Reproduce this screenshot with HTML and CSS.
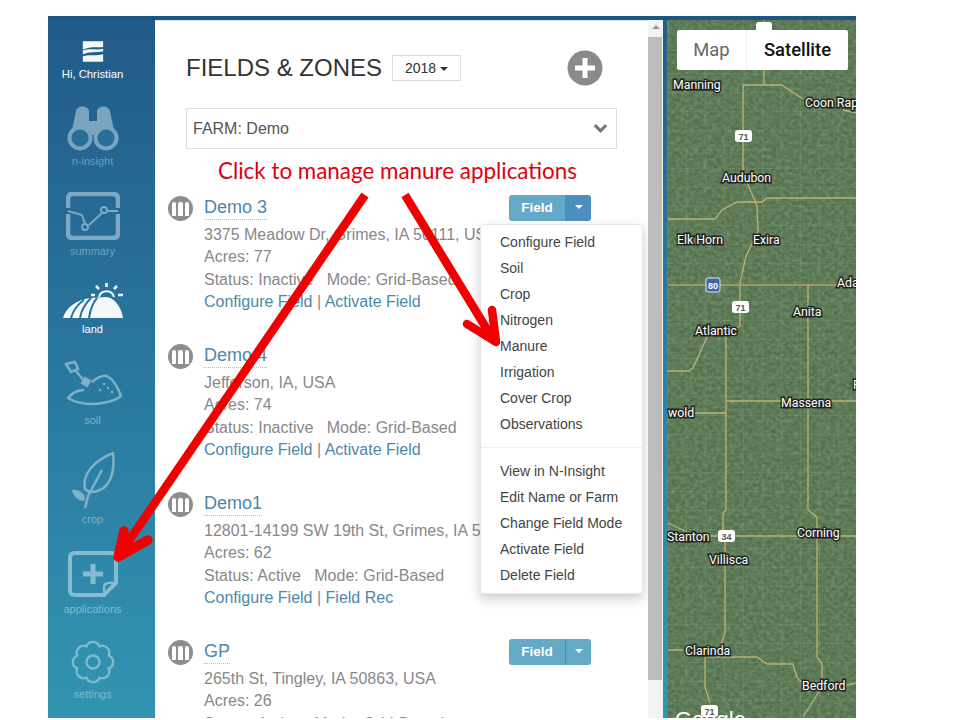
FILE: index.html
```html
<!DOCTYPE html>
<html lang="en">
<head>
<meta charset="utf-8">
<title>Fields &amp; Zones</title>
<link rel="stylesheet" href="styles.css">
</head>
<body>
<div class="app">
  <nav class="sidebar">
    <a class="nav-item nav-user">
      <svg class="ico-logo" viewBox="0 0 26 24"><path d="M2 1h22v6c-7 1-15-1-22 3zM2 11c7-3 15 0 22-2v3c-7 1-15 0-22 3zM2 17c7-2 15 0 22-2v8H2z" fill="#f4f7f9"/></svg>
      <span>Hi, Christian</span>
    </a>
    <a class="nav-item nav-ins">
      <svg class="ico-bino" viewBox="0 0 52 46" fill="none"><path d="M4 30L9 6c1-6 12-6 13 0v10h8V6c1-6 12-6 13 0l5 24z" fill="#7ba4bf"/><circle cx="13" cy="33" r="10.5" fill="#286f97" stroke="#7ba4bf" stroke-width="4"/><circle cx="39" cy="33" r="10.5" fill="#286f97" stroke="#7ba4bf" stroke-width="4"/></svg>
      <span>n-insight</span>
    </a>
    <a class="nav-item nav-sum">
      <svg class="ico-sum" viewBox="0 0 54 48" fill="none" stroke="#7da9c3" stroke-width="4"><path d="M2 16V7q0-5 5-5h40q5 0 5 5v9M2 22v19q0 5 5 5h40q5 0 5-5V22" stroke-width="4.5"/><path d="M2 19l14 4 3 9M23 33l14-13M41 19h11" stroke-width="2"/><circle cx="19" cy="35" r="3" stroke-width="2"/><circle cx="38" cy="18" r="3" stroke-width="2"/></svg>
      <span>summary</span>
    </a>
    <a class="nav-item nav-land">
      <svg class="ico-land" viewBox="0 0 62 37"><path d="M1 36C4 26 14 17 30 16l14-1c8 0 16 11 17 21z" fill="#f5f8fa"/><path d="M9 36c2-7 7-14 13-18M18 36c1-7 5-14 11-20M27 36c1-7 3-14 8-20" stroke="#28739a" stroke-width="2" fill="none"/><path d="M37 15a7.800 7.800 0 0 1 15 0" fill="none" stroke="#f5f8fa" stroke-width="2"/><path d="M44.500 1v4M34 4l3 3M55 4l-3 3M29 13h4M56 13h5" stroke="#f5f8fa" stroke-width="2.500"/></svg>
      <span>land</span>
    </a>
    <a class="nav-item nav-soil">
      <svg class="ico-soil" viewBox="0 0 58 46" fill="none" stroke="#7fb0c6" stroke-width="2.500"><path d="M2 4l9-2 3 7-7 3zM11 10l11 13"/><rect x="18" y="18" width="8" height="8" fill="#7fb0c6" stroke="none" transform="rotate(30 22 22)"/><path d="M28 22c7-6 11-7 15-6 6 3 11 12 14 20-10 8-37 12-53 2 4-5 10-8 16-8"/><path d="M40 24v0M44 28v0M48 32v0M36 30v0" stroke-linecap="round"/></svg>
      <span>soil</span>
    </a>
    <a class="nav-item nav-crop">
      <svg class="ico-crop" viewBox="0 0 44 58" fill="none" stroke="#7fb2c6" stroke-width="2.500"><path d="M14 37c-3-14 8-28 28-36 2 18-2 37-20 39-3 0-6-1-8-3z"/><path d="M14 56l3-12 14-26"/><path d="M13 49C7 49 2 44 1 38c5-1 12 2 13 8z" fill="#7fb2c6" stroke="none"/></svg>
      <span>crop</span>
    </a>
    <a class="nav-item nav-app">
      <svg class="ico-app" viewBox="0 0 50 46" fill="none" stroke="#84bdd1" stroke-width="4"><path d="M36 44H7q-5 0-5-5V7q0-5 5-5h36q5 0 5 5v25z"/><path d="M36 44V37q0-5 5-5h7" stroke-width="2.500"/><path d="M25 13v20M15 23h20" stroke-width="5"/></svg>
      <span>applications</span>
    </a>
    <a class="nav-item nav-set">
      <svg class="ico-set" viewBox="0 0 44 44" fill="none" stroke="#7cbacd" stroke-width="2.400"><path d="M15.500 6.300A7 7 0 0 1 28.500 6.300A7 7 0 0 1 37.700 15.500A7 7 0 0 1 37.700 28.500A7 7 0 0 1 28.500 37.700A7 7 0 0 1 15.500 37.700A7 7 0 0 1 6.300 28.500A7 7 0 0 1 6.300 15.500A7 7 0 0 1 15.500 6.300z"/><circle cx="22" cy="22" r="6.500"/></svg>
      <span>settings</span>
    </a>
  </nav>

  <main class="panel">
    <header class="panel-head">
      <h1>FIELDS &amp; ZONES</h1>
      <button class="year">2018<i class="caret"></i></button>
      <span class="add"><svg viewBox="0 0 36 36"><circle cx="18" cy="18" r="17.500" fill="#8a8a8a"/><path d="M18 8v20M8 18h20" stroke="#fff" stroke-width="5"/></svg></span>
    </header>
    <div class="farm">
      <span>FARM: Demo</span>
      <svg class="chev" viewBox="0 0 16 11"><path d="M2 2l6 6 6-6" fill="none" stroke="#777" stroke-width="3.400"/></svg>
    </div>

    <section class="fields">
      <article class="field">
        <span class="f-ico"><i></i><i></i><i></i></span>
        <div class="f-body">
          <a class="f-name">Demo 3</a>
          <p>3375 Meadow Dr, Grimes, IA 50111, USA</p>
          <p>Acres: 77</p>
          <p>Status: Inactive &nbsp; Mode: Grid-Based</p>
          <p><a>Configure Field</a> | <a>Activate Field</a></p>
        </div>
        <div class="btn-group"><span class="btn">Field</span><span class="btn-c open"><i class="caret"></i></span></div>
      </article>
      <article class="field">
        <span class="f-ico"><i></i><i></i><i></i></span>
        <div class="f-body">
          <a class="f-name">Demo 4</a>
          <p>Jefferson, IA, USA</p>
          <p>Acres: 74</p>
          <p>Status: Inactive &nbsp; Mode: Grid-Based</p>
          <p><a>Configure Field</a> | <a>Activate Field</a></p>
        </div>
      </article>
      <article class="field">
        <span class="f-ico"><i></i><i></i><i></i></span>
        <div class="f-body">
          <a class="f-name">Demo1</a>
          <p>12801-14199 SW 19th St, Grimes, IA 50111, USA</p>
          <p>Acres: 62</p>
          <p>Status: Active &nbsp; Mode: Grid-Based</p>
          <p><a>Configure Field</a> | <a>Field Rec</a></p>
        </div>
      </article>
      <article class="field">
        <span class="f-ico"><i></i><i></i><i></i></span>
        <div class="f-body">
          <a class="f-name">GP</a>
          <p>265th St, Tingley, IA 50863, USA</p>
          <p>Acres: 26</p>
          <p>Status: Active &nbsp; Mode: Grid-Based</p>
        </div>
        <div class="btn-group"><span class="btn">Field</span><span class="btn-c"><i class="caret"></i></span></div>
      </article>
    </section>

    <ul class="menu">
      <li>Configure Field</li><li>Soil</li><li>Crop</li><li>Nitrogen</li><li>Manure</li><li>Irrigation</li><li>Cover Crop</li><li>Observations</li>
      <li class="sep"></li>
      <li>View in N-Insight</li><li>Edit Name or Farm</li><li>Change Field Mode</li><li>Activate Field</li><li>Delete Field</li>
    </ul>
  </main>

  <div class="scroll"><span class="s-up"></span><span class="s-thumb"></span></div>

  <section class="map">
    <svg class="map-svg" viewBox="0 0 189 702">
      <defs>
        <filter id="tex" x="0" y="0" width="100%" height="100%">
          <feTurbulence type="fractalNoise" baseFrequency="0.22 0.28" numOctaves="3" seed="7"/>
          <feColorMatrix values="0 0 0 0 .16  0 0 0 0 .30  0 0 0 0 .17  1.500 0 0 0 -.45"/>
        </filter>
        <pattern id="sections" width="19" height="19" patternUnits="userSpaceOnUse">
          <path d="M0 .5h19M.5 0v19" stroke="#a5b08f" stroke-opacity=".16" fill="none"/>
        </pattern>
      </defs>
      <rect width="189" height="702" fill="#566f4c"/>
      <rect width="189" height="702" filter="url(#tex)"/>
      <rect width="189" height="702" fill="url(#sections)"/>
      <g class="roads">
        <path d="M97 4V69M76 157V69H115L136 83M176 94L189 97"/>
        <path d="M76 157L90 190L91 215L79 240L73 267V310L59 318"/>
        <path d="M1 203H48L55 194L70 186H95L100 182H189"/>
        <path d="M1 269H189" class="hwy"/>
        <path d="M141 269V494L150 501V641L155 647V667"/>
        <path d="M59 320V494L56 497V517L58 525V617L53 631"/>
        <path d="M59 385H189M26 397H59"/>
        <path d="M1 520H189M1 507L20 516"/>
        <path d="M1 634H16M40 641H90L100 648H126L130 662L136 667"/>
        <path d="M38 641V671L43 687"/>
        <path d="M153 674L136 701M176 670L189 667"/>
        <path d="M40 321L26 352L22 355H0"/>
      </g>
      <g class="badges">
        <rect x="89" y="6" width="16" height="12" rx="3"/>
        <rect x="68" y="114" width="17" height="12" rx="3"/>
        <rect x="65" y="285" width="17" height="12" rx="3"/>
        <rect x="51" y="514" width="17" height="12" rx="3"/>
        <rect x="34" y="689" width="17" height="12" rx="3"/>
      </g>
      <g class="badge-txt">
        <text x="76.500" y="123.500">71</text><text x="73.500" y="294.500">71</text><text x="59.500" y="523.500">34</text><text x="42.500" y="698.500">71</text>
      </g>
      <rect x="39" y="262" width="14" height="14" rx="2" fill="#3d69a8" stroke="#e8e8e8"/>
      <text class="i80" x="46" y="273">80</text>
      <g class="labels">
        <text x="6" y="73">Manning</text>
        <text x="138" y="91">Coon Rap</text>
        <text x="55" y="166">Audubon</text>
        <text x="10" y="228">Elk Horn</text>
        <text x="86" y="228">Exira</text>
        <text x="170" y="271">Ada</text>
        <text x="126" y="300">Anita</text>
        <text x="28" y="319">Atlantic</text>
        <text x="186" y="373">F</text>
        <text x="114" y="391">Massena</text>
        <text x="1" y="401">wold</text>
        <text x="0" y="525">Stanton</text>
        <text x="42" y="548">Villisca</text>
        <text x="130" y="521">Corning</text>
        <text x="18" y="639">Clarinda</text>
        <text x="135" y="674">Bedford</text>
      </g>
      <text class="google" x="8" y="711">Google</text>
    </svg>
    <div class="map-type"><span class="mt-map">Map</span><span class="mt-sat">Satellite</span></div>
  </section>

  <div class="note">Click to manage manure applications</div>
  <svg class="arrows" viewBox="0 0 808 702">
    <path d="M317 179L74 535" stroke="#f00000" stroke-width="8.500" fill="none"/>
    <path d="M70 541L76 515M70 541L100 524" stroke="#f00000" stroke-width="9.500" stroke-linecap="round" fill="none"/>
    <path d="M357 179L443 320" stroke="#f00000" stroke-width="8.500" fill="none"/>
    <path d="M448 326L444 294M448 326L419 308" stroke="#f00000" stroke-width="8.500" stroke-linecap="round" fill="none"/>
  </svg>
</div>
</body>
</html>
```

FILE: styles.css
```css
* { box-sizing: border-box; }
html, body { margin: 0; padding: 0; background: #fff; }
body { font-family: "Liberation Sans", Arial, sans-serif; }
.app {
  position: relative;
  display: flex;
  width: 808px;
  height: 702px;
  margin: 16px 0 0 48px;
  overflow: hidden;
  background: linear-gradient(#1f5f8b, #2a7fa5 50%, #2f96b2);
  border-top: 4px solid #1d5680;
}

/* sidebar */
.sidebar {
  width: 107px;
  flex: none;
  margin-top: -4px;
  display: flex;
  flex-direction: column;
  align-items: center;
  padding: 24px 18px 0 0;
  background: linear-gradient(#215a89, #2a7aa0 55%, #3294b1);
}
.nav-item { display: flex; flex-direction: column; align-items: center; flex: none; font-size: 11px; color: #6f9cb8; line-height: 13px; }
.nav-item svg { display: block; flex: none; }
.nav-user { color: #fff; gap: 5px; height: 64px; font-size: 11.3px; }
.ico-logo { width: 24px; height: 23px; }
.ico-bino { width: 52px; height: 48px; margin-bottom: 3px; }
.nav-ins { height: 88px; color: #6d9db8; }
.ico-sum { width: 54px; height: 48px; margin-bottom: 5px; }
.nav-sum { height: 90px; color: #6fa3bd; }
.ico-land { width: 62px; height: 37px; margin-bottom: 4px; }
.nav-land { height: 78px; color: #fff; }
.ico-soil { width: 58px; height: 46px; margin-bottom: 8px; }
.nav-soil { height: 92px; color: #7fb2c6; }
.ico-crop { width: 44px; height: 58px; margin-bottom: 3px; }
.nav-crop { height: 99px; color: #7fb2c6; }
.ico-app { width: 50px; height: 46px; margin-bottom: 6px; }
.nav-app { height: 89px; color: #82bbcf; }
.ico-set { width: 44px; height: 44px; margin-bottom: 4px; }
.nav-set { color: #7cbacd; }

/* panel */
.panel {
  position: relative;
  width: 493px;
  flex: none;
  background: #fff;
  border-top: 1px solid #d4e5f0;
  padding: 0 0 0 31px;
  overflow: hidden;
}
.panel-head { display: flex; align-items: center; height: 36px; margin-top: 29px; }
.panel-head h1 { margin: 0; font-size: 24px; font-weight: 400; color: #333; white-space: nowrap; }
.year {
  margin-left: 10px;
  width: 69px; height: 26px;
  background: #fff;
  border: 1px solid #ddd;
  font: 14px "Liberation Sans", Arial, sans-serif;
  color: #333;
  padding: 0;
}
.caret { display: inline-block; margin-left: 4px; vertical-align: middle; border-top: 4px solid currentColor; border-left: 4px solid transparent; border-right: 4px solid transparent; }
.add { margin-left: 106px; width: 36px; height: 36px; }
.add svg { display: block; width: 36px; height: 36px; }
.farm {
  display: flex; align-items: center; justify-content: space-between;
  width: 431px; height: 41px;
  margin-top: 22px;
  padding: 0 8px 0 6px;
  border: 1px solid #ddd;
  font-size: 16px; color: #555;
}
.chev { width: 15px; height: 11px; }

.fields { margin-top: 46px; margin-left: -18px; }
.field { display: flex; height: 148px; position: relative; }
.f-ico {
  flex: none; width: 25px; height: 25px; margin-top: 1px;
  border-radius: 50%; background: #8e8e8e;
  display: flex; gap: 2px; align-items: center; justify-content: center;
}
.f-ico i { width: 4.500px; height: 14px; background: #fff; border-radius: 2px 2px 0 0; }
.f-body { margin-left: 11px; }
.f-body p { margin: 0; font-size: 16px; line-height: 22.4px; color: #888; white-space: nowrap; }
.f-body a { color: #4f87aa; }
.f-name { display: inline-block; font-size: 18px; line-height: 24px; border-bottom: 1px dotted #bbb; margin-bottom: 4px; }
.f-body .f-name { color: #4b87ad; }
.btn-group { position: absolute; left: 341px; top: 0; display: flex; height: 26px; font-size: 13.5px; font-weight: 700; color: #fff; }
.btn { width: 56px; background: #64a9c5; border-radius: 3px 0 0 3px; text-align: center; line-height: 26px; }
.btn-c { width: 26px; background: #64a9c5; border-left: 1px solid #4f90ae; border-radius: 0 3px 3px 0; text-align: center; line-height: 24px; }
.btn-c.open { background: #4c8ebd; }
.btn-c .caret { margin: 0; }

.menu {
  position: absolute; left: 325px; top: 203px;
  width: 163px; height: 370px;
  margin: 0; padding: 4px 0 0 19px;
  list-style: none;
  background: #fff;
  border: 1px solid #e6e6e6;
  border-radius: 3px;
  box-shadow: 0 5px 12px rgba(0,0,0,.2);
  font-size: 14px; color: #444;
}
.menu li { height: 26px; line-height: 26px; white-space: nowrap; }
.menu .sep { height: 1px; margin: 10px 0 10px -19px; background: #eee; }

/* scrollbar */
.scroll { width: 15px; flex: none; background: #f3f3f3; display: flex; flex-direction: column; align-items: stretch; }
.s-up { height: 17px; position: relative; flex: none; }
.s-up::after { content: ""; position: absolute; left: 4px; top: 5px; border-bottom: 4px solid #999; border-left: 4px solid transparent; border-right: 4px solid transparent; }
.s-thumb { width: 14px; height: 643px; flex: none; background: #bcbcbc; }

/* map */
.map { position: relative; flex: 1; margin-left: 4px; background: #566f4c; overflow: hidden; }
.map-svg { display: block; width: 189px; height: 702px; margin-top: -4px; }
.roads path { fill: none; stroke: #c5b878; stroke-width: 1.3; opacity: .9; }
.roads .hwy { stroke: #a99a5c; stroke-width: 1.800; }
.badges rect { fill: #fff; }
.badge-txt text { font: 700 9px "Liberation Sans", Arial, sans-serif; text-anchor: middle; fill: #555; }
.i80 { font: 700 9px "Liberation Sans", Arial, sans-serif; text-anchor: middle; fill: #fff; }
.labels text { font: 12.3px "Roboto", sans-serif; fill: #fff; stroke: #1f2420; stroke-width: 3px; paint-order: stroke; }
.google { font: 22px "Liberation Sans", sans-serif; fill: #fff; }
.map-type {
  position: absolute; left: 10px; top: 10px;
  display: flex; width: 171px; height: 40px;
  background: #fff; border-radius: 2px;
  font: 18.4px "Roboto", sans-serif;
  line-height: 40px;
}
.mt-map { width: 70px; text-align: center; color: #666; border-right: 1px solid #eee; }
.mt-sat { flex: 1; text-align: center; color: #111; font-weight: 500; }

/* annotations */
.note { position: absolute; left: 170px; top: 137px; font: 22.4px "Lato", sans-serif; color: #e0000f; white-space: nowrap; }
.arrows { position: absolute; left: 0; top: -4px; width: 808px; height: 702px; pointer-events: none; }
```
